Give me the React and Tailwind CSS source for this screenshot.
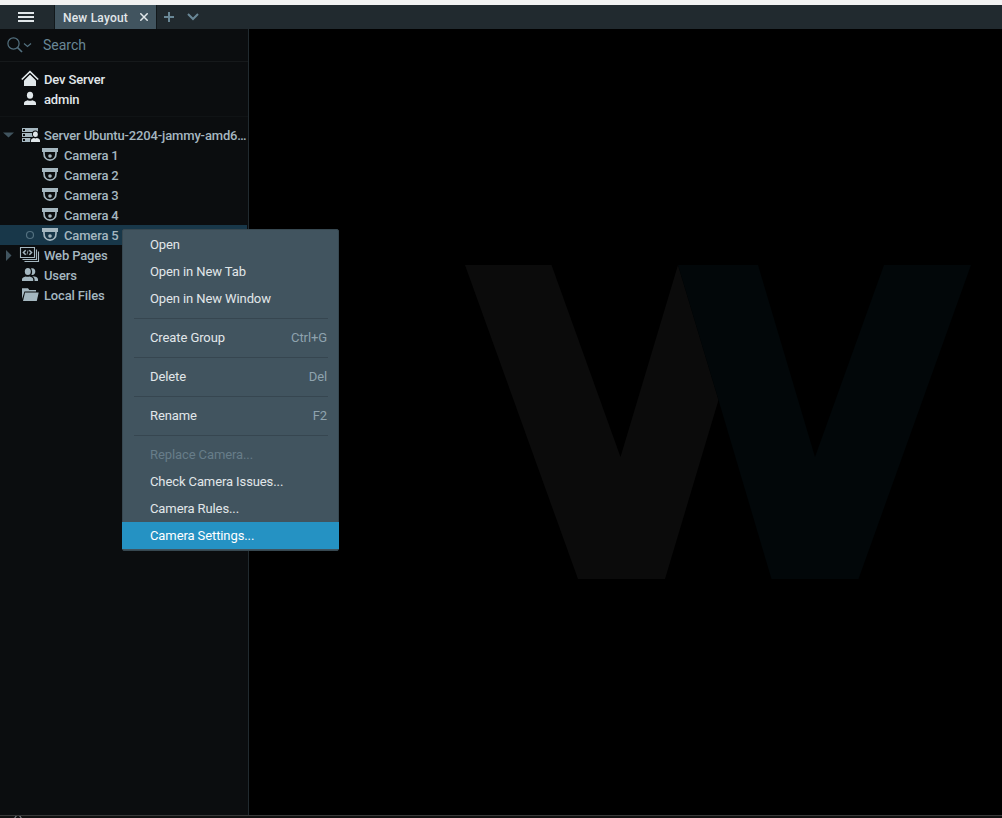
const CAMERAS = ['Camera 1', 'Camera 2', 'Camera 3', 'Camera 4', 'Camera 5'];

const MENU = [
  [{ label: 'Open' }, { label: 'Open in New Tab' }, { label: 'Open in New Window' }],
  [{ label: 'Create Group', hint: 'Ctrl+G' }],
  [{ label: 'Delete', hint: 'Del' }],
  [{ label: 'Rename', hint: 'F2' }],
  [
    { label: 'Replace Camera...', disabled: true },
    { label: 'Check Camera Issues...' },
    { label: 'Camera Rules...' },
    { label: 'Camera Settings...', active: true },
  ],
];

function Icon({ children, className = '' }) {
  return (
    <svg viewBox="0 0 20 20" className={`h-5 w-5 shrink-0 ${className}`} fill="currentColor">
      {children}
    </svg>
  );
}

function HomeIcon() {
  return (
    <Icon>
      <path d="M10 5.600 16 11.400V17H4V11.400Z" />
      <path d="M1.800 10.500 10 2.600l8.200 7.900" fill="none" stroke="currentColor" strokeWidth="1.700" />
      <path d="M2.800 11.600 10 4.600l7.200 7" fill="none" stroke="#0b0d0f" strokeWidth=".8" />
    </Icon>
  );
}

function UserIcon() {
  return (
    <Icon>
      <ellipse cx="10" cy="6.300" rx="3.100" ry="3.500" />
      <path d="M4 16V14.200C4 12.400 6 11.600 7.800 11.200Q10 12.200 12.200 11.200C14 11.600 16 12.400 16 14.200V16Z" />
    </Icon>
  );
}

function ServerIcon() {
  return (
    <Icon>
      <path d="M2 3h16v4H2ZM2 8h16v4H2ZM2 13h16V17H2Z" />
      <path d="M3 4h2v2H3ZM3 9h2v2H3ZM3 14h2v2H3Z" fill="#0b0d0f" />
      <path d="M15.300 5.500c2.300 0 3.200 1.500 3.200 3.200 0 1-.4 2-1 2.700 1.600.4 2.500 1.300 2.500 3V18h-9.800v-3.300c0-1.700.9-2.600 2.800-3-.6-.7-1-1.700-1-2.700 0-1.700 1-3.500 3.300-3.500Z" fill="#0b0d0f" />
      <ellipse cx="15.400" cy="9.200" rx="2.400" ry="2.700" fill="#e1e7ea" />
      <path d="M11 17v-1.500c0-1.500 1.500-2 3-2.400q1.400.6 2.800 0c1.500.4 3.200.9 3.200 2.400V17Z" fill="#e1e7ea" />
    </Icon>
  );
}

function CameraIcon() {
  return (
    <Icon>
      <path d="M2 3h16v4H2Z" />
      <path d="M4 6v2.500C4 12.500 6.400 15.100 10 15.100S16 12.500 16 8.500V6" fill="none" stroke="currentColor" strokeWidth="1.700" />
      <circle cx="10" cy="11" r="1.800" />
    </Icon>
  );
}

function WebPagesIcon() {
  return (
    <Icon className="overflow-visible">
      <path d="M.5 2.500h14v10H.5ZM2.500 14.500h14V4.500M4.500 16.500h14V6.500" fill="none" stroke="currentColor" strokeWidth="1.100" />
      <path d="M5.700 5.200 3.400 7.500l2.300 2.300M9.300 5.200l2.300 2.300L9.300 9.800" fill="none" stroke="currentColor" strokeWidth="1.500" />
      <path d="M8 5.500 7 9.500" fill="none" stroke="currentColor" strokeWidth=".8" />
    </Icon>
  );
}

function UsersIcon() {
  return (
    <Icon>
      <ellipse cx="7.800" cy="6.600" rx="3" ry="3.500" />
      <path d="M2 16v-1.700c0-1.700 1.800-2.500 3.500-2.900q2 .9 4.200 0c1.700.4 3.500 1.200 3.500 2.900V16Z" />
      <path d="M11 3.400c2.600-.9 4.300.9 4.300 3.200 0 2.600-2 4-3.900 3.200 1.100-2 1-4.500-.4-6.400ZM12.300 11.300c3.300.1 5.700 1 5.700 3V16h-3.400c.2-2.200-.4-3.600-2.300-4.700Z" />
    </Icon>
  );
}

function FolderIcon() {
  return (
    <Icon>
      <path d="M2 14V3.300h6l1.300 1.700H16v1.500H4.500Z" />
      <path d="M5 7.500H18.700L16.800 16H3Z" />
    </Icon>
  );
}

function Row({ icon, label, className = 'text-[#a5b7c0]' }) {
  return (
    <div className={`flex h-5 items-center gap-1 pl-5 font-medium ${className}`}>
      {icon}
      <span className="pt-px tracking-[-0.15px] whitespace-nowrap">{label}</span>
    </div>
  );
}

function TitleBar() {
  return (
    <header className="flex h-6 shrink-0 bg-[#212a2f]">
      <button className="flex w-[54px] items-center justify-center pr-0.5">
        <svg viewBox="0 0 16 10" className="h-2.5 w-4" fill="#e1e7ea" shapeRendering="crispEdges">
          <path d="M0 0h16v2H0ZM0 4h16v2H0ZM0 8h16v2H0Z" />
        </svg>
      </button>
      <div className="flex w-[103px] items-center justify-between border-x border-[#12181b] bg-[#41545f] pr-2 pl-2 text-[12px] font-medium text-[#e1e7ea]">
        <span className="pt-px tracking-[0.2px] whitespace-nowrap">New Layout</span>
        <svg viewBox="0 0 8 8" className="h-2 w-2" stroke="#e1e7ea" strokeWidth="1.500">
          <path d="M.3.3l7.400 7.400M7.700.3.3 7.700" />
        </svg>
      </div>
      <div className="flex items-center gap-[13px] pl-[7px]">
        <svg viewBox="0 0 10 10" className="h-2.5 w-2.5" stroke="#698796" strokeWidth="2">
          <path d="M5 0v10M0 5h10" />
        </svg>
        <svg viewBox="0 0 12 8" className="h-2 w-3" fill="none" stroke="#698796" strokeWidth="2">
          <path d="M1 1l5 5 5-5" />
        </svg>
      </div>
    </header>
  );
}

function Sidebar() {
  return (
    <aside className="w-[249px] shrink-0 border-r border-[#212a2f] bg-[#0b0d0f] text-[13px]">
      <div className="flex h-[33px] items-center border-b border-[#16191b] pl-[7px] text-[#698796]">
        <svg viewBox="0 0 25 16" className="h-4 w-[25px]" fill="none" stroke="#53707f" strokeWidth="1.200">
          <circle cx="6.500" cy="6.500" r="5.600" />
          <path d="M10.500 10.500 15 15" strokeWidth="1.700" />
          <path d="M17 6.500l3.500 3L24 6.500" />
        </svg>
        <span className="ml-[11px] text-[14px]">Search</span>
      </div>
      <div className="pt-[7px]">
        <Row icon={<HomeIcon />} label="Dev Server" className="text-[#e1e7ea]" />
        <Row icon={<UserIcon />} label="admin" className="text-[#e1e7ea]" />
      </div>
      <div className="mt-[7px] h-px bg-[#101315]" />
      <div className="pt-2">
        <div className="flex items-center">
          <svg viewBox="0 0 11 6" className="-mr-[14px] ml-[3px] h-1.5 w-[11px] shrink-0" fill="#41545f">
            <path d="M0 .5h11L5.500 5.500Z" />
          </svg>
          <Row icon={<ServerIcon />} label="Server Ubuntu-2204-jammy-amd6…" />
        </div>
        {CAMERAS.map((name) => (
          <div key={name} className={name === 'Camera 5' ? 'mr-px flex h-5 items-center bg-[#183749] pl-5' : 'flex h-5 items-center pl-5'}>
            <svg viewBox="0 0 20 20" className="-mr-5 h-5 w-5 shrink-0">
              {name === 'Camera 5' && <circle cx="10" cy="10" r="3.500" fill="none" stroke="#53707f" strokeWidth="1.200" />}
            </svg>
            <Row icon={<CameraIcon />} label={name} />
          </div>
        ))}
        <div className="flex items-center">
          <svg viewBox="0 0 6 11" className="-mr-3 ml-1.5 h-[11px] w-1.5 shrink-0" fill="#41545f">
            <path d="M0 0v11L5.500 5.500Z" />
          </svg>
          <Row icon={<WebPagesIcon />} label="Web Pages" />
        </div>
        <Row icon={<UsersIcon />} label="Users" />
        <Row icon={<FolderIcon />} label="Local Files" />
      </div>
    </aside>
  );
}

function Scene() {
  return (
    <main className="flex-1 bg-black">
      <svg viewBox="249 29 753 786" className="h-full w-full">
        <path d="M465 265H551.500L620.500 457 678 265 718.500 400 665 579H578Z" fill="#0b0b0b" />
        <path d="M678 265H758L815 457 884 265H971L858.500 579H771.500L718.500 400Z" fill="#020709" />
      </svg>
    </main>
  );
}

function ContextMenu() {
  return (
    <div className="absolute top-[229px] left-[122px] w-[217px] rounded-[2px] border border-[#374851] bg-[#41545f] pt-px pb-px text-[13px] tracking-[-0.1px] text-[#e1e7ea]">
      {MENU.map((group, i) => (
        <div key={i}>
          {i > 0 && (
            <div className="mr-2.5 ml-[11px] flex h-3 items-center pt-px">
              <div className="h-px w-full bg-[#364650]" />
            </div>
          )}
          {group.map(({ label, hint, disabled, active }) => (
            <div
              key={label}
              className={`flex h-[27px] items-center justify-between whitespace-nowrap ${
                active ? '-mx-px bg-[#2592c3] pr-3 pl-7 text-white' : 'pr-[11px] pl-[27px]'
              } ${disabled ? 'text-[#677d89]' : ''}`}
            >
              <span>{label}</span>
              {hint && <span className="text-[#8fa3ae]">{hint}</span>}
            </div>
          ))}
        </div>
      ))}
    </div>
  );
}

export default function App() {
  return (
    <div className="relative flex h-[818px] w-[1002px] flex-col overflow-hidden bg-[#0b0d0f] font-[Roboto,sans-serif]">
      <div className="h-[5px] shrink-0 bg-[#f2f2f2]" />
      <TitleBar />
      <div className="flex h-[786px] shrink-0">
        <Sidebar />
        <Scene />
      </div>
      <div className="h-px shrink-0 bg-[#3a3a3a]" />
      <div className="flex h-0.5 bg-[#111111] pl-[14px]">
        <svg viewBox="0 0 8 2" className="h-0.5 w-2" stroke="#a0a8b0" fill="none">
          <path d="M.7 2 2.300 0M5.700 0l1.600 2" />
        </svg>
      </div>
      <ContextMenu />
    </div>
  );
}
